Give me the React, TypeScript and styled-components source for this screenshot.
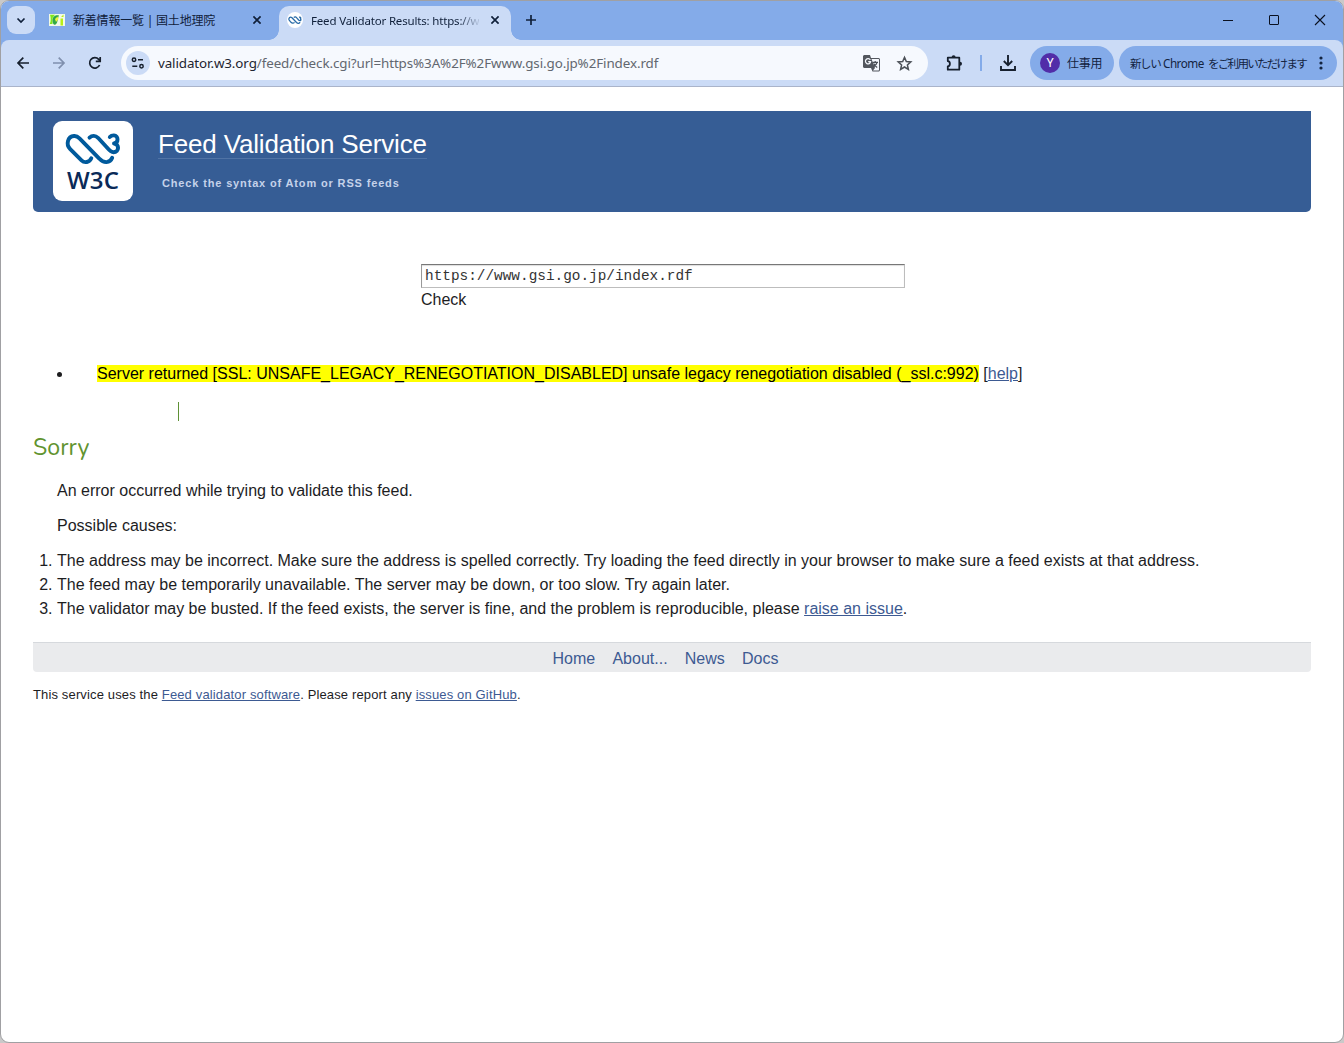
import React from 'react';
import styled, { createGlobalStyle } from 'styled-components';

const UI = `"Noto Sans", "Noto Sans CJK JP", sans-serif`;
const ARIAL = `"Liberation Sans", Arial, sans-serif`;

const Global = createGlobalStyle`
  * { box-sizing: border-box; }
  body { margin: 0; background: #c9c9c9; overflow: hidden; }
`;

const Window = styled.div`
  width: 1344px; height: 1043px;
  border: 1px solid #a0a0a3;
  border-radius: 9px;
  background: #fff;
  overflow: hidden;
  display: flex; flex-direction: column;
  font-family: ${UI};
`;
const TabStrip = styled.div`
  flex: 0 0 47px; margin-bottom: -8px;
  padding: 5px 0 0 6px;
  background: #84abe9;
  display: flex; align-items: flex-start;
  color: #10203a;
`;
const TabSearch = styled.div`
  width: 28px; height: 28px; border-radius: 9px; margin: 0 14px 0 0;
  background: #cbdbf6;
  display: grid; place-items: center;
`;
const Tab = styled.div<{ $w: number; $active?: boolean }>`
  position: relative;
  width: ${p => p.$w}px; height: ${p => (p.$active ? 34 : 28)}px;
  padding: 0 0 ${p => (p.$active ? 6 : 0)}px 0;
  border-radius: 10px 10px 0 0;
  background: ${p => (p.$active ? '#cbdbf6' : 'transparent')};
  display: flex; align-items: center;
  font-size: 12px;
  &::before, &::after {
    content: ''; display: ${p => (p.$active ? 'block' : 'none')};
    position: absolute; bottom: 0; width: 10px; height: 10px;
  }
  &::before { left: -10px; background: radial-gradient(circle at 0 0, transparent 9.5px, #cbdbf6 10px); }
  &::after { right: -10px; background: radial-gradient(circle at 100% 0, transparent 9.5px, #cbdbf6 10px); }
`;
const TabTitle = styled.div<{ $w: number; $ls: number; $size?: number; $fade?: boolean }>`
  width: ${p => p.$w}px; margin-left: 8px; padding-top: 2px;
  white-space: nowrap;
  font-size: ${p => p.$size ?? 12}px;
  letter-spacing: ${p => p.$ls}px;
  line-height: 20px;
  ${p => p.$fade && 'mask-image: linear-gradient(to right, #000 88%, rgba(0,0,0,.15) 99%);'}
`;
const Icon = styled.svg<{ $ml?: number; $sw?: number }>`
  display: block; flex: none; overflow: visible;
  margin-left: ${p => p.$ml ?? 0}px;
  fill: none; stroke: currentColor; stroke-width: ${p => p.$sw ?? 1.7};
`;
const WinButtons = styled.div`
  margin-left: auto; display: flex; height: 28px; align-items: center;
  gap: 36px; padding-right: 18px; color: #0a1020;
`;
const Toolbar = styled.div`
  position: relative;
  flex: 0 0 47px; height: 47px;
  border-bottom: 1px solid #aab4ca;
  border-radius: 8px 8px 0 0;
  background: #cbdbf6;
  display: flex; align-items: center;
  padding-left: 14px;
  color: #17202e;
`;
const Omnibox = styled.div`
  width: 807px; height: 34px; border-radius: 17px; margin-left: 20px;
  background: #f6f9fe;
  display: flex; align-items: center;
  padding-left: 5px; color: #4c5158;
`;
const SiteInfo = styled.div`
  width: 24px; height: 24px; border-radius: 50%;
  background: #cbdbf6; color: #17202e;
  display: grid; place-items: center;
`;
const Url = styled.div`
  margin-left: 8px; width: 705px;
  font-size: 13.4px; letter-spacing: -0.1px;
  color: #62676f; white-space: nowrap; line-height: 20px;
  b { font-weight: 400; color: #1d2430; }
`;
const Divider = styled.div`
  width: 2px; height: 16px; margin: 0 18px 0 17px; background: #84abe9;
`;
const Pill = styled.div<{ $w: number; $ml: number; $pl: number }>`
  flex: none;
  width: ${p => p.$w}px; height: 34px; border-radius: 17px;
  margin-left: ${p => p.$ml}px; padding-left: ${p => p.$pl}px;
  background: #84abe9; color: #13233f;
  display: flex; align-items: center;
  font-size: 12px; white-space: nowrap;
`;
const Avatar = styled.div`
  width: 20px; height: 20px; border-radius: 50%; margin-right: 7px;
  background: #512da8; color: #fff;
  font: 400 12px/20px Roboto, sans-serif; text-align: center;
`;
const Fit = styled.span<{ $ls: number; $size?: number; $w?: number }>`
  letter-spacing: ${p => p.$ls}px;
  font-size: ${p => p.$size ?? 12}px;
  ${p => p.$w && `width: ${p.$w}px;`}
`;

const Page = styled.main`
  flex: 1; padding: 24px 32px 0;
  font: 16px/24px ${ARIAL};
  color: #1d1d1f;
`;
const Banner = styled.header`
  height: 101px; border-radius: 0 0 5px 5px;
  background: #365d95;
  display: flex; padding: 10px 0 0 20px;
`;
const Logo = styled.div`
  width: 80px; height: 80px; border-radius: 9px; background: #fff;
  display: flex; flex-direction: column; align-items: center;
`;
const LogoText = styled.div`
  font: 600 24px/24px "Open Sans", sans-serif; color: #0a2a58;
  margin-top: 1px; letter-spacing: 0.2px;
`;
const BannerText = styled.div`
  margin-left: 25px;
`;
const Title = styled.div`
  margin-top: 8px; height: 30px;
  font-size: 26px; line-height: 30px; letter-spacing: -0.17px; color: #fff;
  border-bottom: 1px solid #5073a5;
  white-space: nowrap;
`;
const Tagline = styled.div`
  margin: 16px 0 0 4px;
  font-size: 11px; font-weight: 700; line-height: 16px; letter-spacing: 0.85px;
  color: #c5d2ea;
`;
const Form = styled.div`
  width: 484px; margin: 52px 0 0 388px;
`;
const Field = styled.div`
  height: 24px; padding: 0 3px;
  border: 1px solid #bdbdbd; border-top-color: #777; border-left-color: #999;
  box-shadow: inset 0 1px 1px #ddd;
  font: 14.4px/22px "Liberation Mono", monospace;
  color: #333;
`;
const Message = styled.ul`
  margin: 50px 0 0; padding: 0 0 0 64px; list-style: none;
  display: flex;
  li { position: relative; }
  li::before {
    content: ''; position: absolute; left: -40px; top: 10px;
    width: 5px; height: 5px; border-radius: 50%; background: #1d1d1f;
  }
`;
const Mark = styled.span`
  background: #ff0; color: #000;
`;
const Link = styled.a`
  color: #3d5a92; text-decoration: underline;
`;
const Bar = styled.div`
  width: 1px; height: 19px; margin: 16px 0 0 145px; background: #5f9136;
`;
const Sorry = styled.h2`
  margin: 11px 0 0; font: 400 23.2px/32px Nunito, "Noto Sans", sans-serif; color: #61932f;
`;
const Para = styled.p<{ $mt: number }>`
  margin: ${p => p.$mt}px 0 0 24px;
`;
const Causes = styled.ol`
  margin: 11px 0 0; padding: 0 0 0 24px;
`;
const Footer = styled.nav`
  height: 30px; margin-top: 21px; padding: 0 13px 0 0;
  background: #eaebed; border-top: 1px solid #d6d9dd; border-radius: 0 0 4px 4px;
  display: flex; justify-content: center; gap: 17.2px;
  line-height: 32px; color: #3d5a92;
`;
const Small = styled.div`
  margin-top: 11px; font-size: 13px; letter-spacing: 0.14px;
`;

const Swirl = () => (
  <svg width="80" height="46" viewBox="0 0 80 46" fill="none" stroke="#005a9c" strokeWidth="3.9" strokeLinecap="round" strokeLinejoin="round">
    <path d="M38.300 37.200C36.500 41.500 31.500 42.300 28.500 39.300L17 27.800C12.800 23.500 14.500 15.500 21 15C23.500 14.800 25 15.800 26.500 17.300L46.500 37.800C50.500 42.200 57 42.500 59.200 36.800" />
    <path d="M36.500 16.700C39 14.300 42.500 14.300 45 16.800L53.500 26C56.500 29.500 58.300 31.200 60.500 31.200C66.500 31 66.500 23 61 22.500C65.800 21.800 65.600 14.600 61 14.400C59 14.300 57.800 14.900 56.800 16" />
  </svg>
);

const Cross = ({ ml }: { ml: number }) => (
  <Icon $ml={ml} width="8" height="8" viewBox="0 0 8 8"><path d="M.4.4l7.200 7.200M7.600.4L.4 7.600" /></Icon>
);

export default function App() {
  return (
    <>
      <Global />
      <Window>
        <TabStrip>
          <TabSearch>
            <Icon width="8" height="5" viewBox="0 0 8 5"><path d="M.5.5L4 4 7.500.5" /></Icon>
          </TabSearch>
          <Tab $w={230}>
            <Icon width="16" height="12" viewBox="0 0 16 12" $sw={0}>
              <rect width="16" height="12" fill="#f3fae6" />
              <path d="M1 .8h5L3.500 4v6H.8C2 7 2 4 1 .8z" fill="#7fe81c" />
              <path d="M12 3l2.500-2.500V3zM11.500 4.500h2.500v7h-2.500z" fill="#b8f016" />
              <path d="M3.500 6.500C3.500 2 7 .8 10 1.500 8.500 4 9 10 6 10.800 4.500 11 3.500 9 3.500 6.500z" fill="#31a846" />
              <path d="M6 5l2.500-2.500L9.500 5 7 8z" fill="#f0f43a" />
            </Icon>
            <TabTitle $w={170} $ls={-0.2}>新着情報一覧 | 国土地理院</TabTitle>
            <Cross ml={10} />
          </Tab>
          <Tab $w={232} $active>
            <Icon $ml={8} width="16" height="16" viewBox="0 0 16 16" $sw={1.3}>
              <circle cx="8" cy="8" r="8" fill="#fff" stroke="none" />
              <path d="M7.500 10.300C6.500 11.500 5 11.300 4 10.300L2.200 8.200C1 6.500 3 4 5 5.700L9.500 10.500C11 12 13 11.500 12.800 9.800M6.800 5.500C7.800 4.600 8.900 4.900 9.500 5.600L11.800 8.200C14 9.400 14.600 7.200 13 6.900C14.400 6.500 13.800 4.700 12 5.300" stroke="#2a6ca8" />
            </Icon>
            <TabTitle $w={168} $size={11.5} $ls={-0.17} $fade>Feed Validator Results: https://w</TabTitle>
            <Cross ml={12} />
          </Tab>
          <Icon $ml={15} width="10" height="28" viewBox="0 0 10 28"><path d="M5 9v10M0 14h10" /></Icon>
          <WinButtons>
            <Icon width="10" height="10" viewBox="0 0 10 10" $sw={1}><path d="M0 5.500h10" /></Icon>
            <Icon width="10" height="10" viewBox="0 0 10 10" $sw={1}><rect x=".5" y=".5" width="9" height="9" rx=".5" /></Icon>
            <Icon width="10" height="10" viewBox="0 0 10 10" $sw={1.1}><path d="M0 0l10 10M10 0L0 10" /></Icon>
          </WinButtons>
        </TabStrip>
        <Toolbar>
          <Icon $ml={2} width="12" height="12" viewBox="0 0 12 12"><path d="M12 6H1M6.300.7L1 6l5.300 5.300" /></Icon>
          <Icon $ml={24} width="12" height="12" viewBox="0 0 12 12" color="#8090ae"><path d="M0 6h11M5.700.7L11 6l-5.300 5.300" /></Icon>
          <Icon $ml={24} width="12" height="12" viewBox="0 0 12 12"><path d="M10.600 8A5.200 5.200 0 1 1 9.700 2.300L11 3.800M11.200 0v4.400H6.800" /></Icon>
          <Omnibox>
            <SiteInfo>
              <Icon width="14" height="12" viewBox="0 0 14 12" $sw={1.5}>
                <circle cx="3" cy="2.700" r="1.700" /><path d="M7 2.700h5M1.300 9.200h5" /><circle cx="10.500" cy="9.200" r="1.700" />
              </Icon>
            </SiteInfo>
            <Url><b>validator.w3.org</b>/feed/check.cgi?url=https%3A%2F%2Fwww.gsi.go.jp%2Findex.rdf</Url>
            <Icon width="17" height="17" viewBox="0 0 17 17" $sw={1.2}>
              <path d="M1.500 0H7l1 3h7.500c.8 0 1.500.7 1.500 1.500V15c0 .8-.7 1.500-1.500 1.500H9.500L8 13H1.500C.7 13 0 12.300 0 11.500v-10C0 .7.700 0 1.500 0z" fill="#53575e" stroke="none" />
              <path d="M8.500 4h7c.3 0 .5.200.5.500V15c0 .3-.2.500-.5.500H10l2-2.500z" fill="#f6f9fe" stroke="none" />
              <path d="M7.300 5A2.600 2.600 0 1 0 7.600 6.700H5.200" stroke="#f6f9fe" />
              <path d="M9.500 7.300h5.500M12.200 6v1.300M14 7.500c-.5 2-2 3.500-3.500 4.500M10.700 8.500c.5 1.500 2 3 3.500 4" />
            </Icon>
            <Icon $ml={17} width="15" height="15" viewBox="0 0 15 15" $sw={1.5}>
              <path d="M7.500 1.300l1.800 4.200 4.500.4-3.400 3 1 4.500-3.900-2.400-3.900 2.400 1-4.500-3.400-3 4.500-.4z" />
            </Icon>
          </Omnibox>
          <Icon $ml={18} width="17" height="17" viewBox="0 0 17 17" $sw={1.8}>
            <path d="M1.800 2.700H13.300V14.700H1.800V11.300C4.600 11 4.600 6.400 1.800 6.100Z" strokeLinejoin="round" />
            <path d="M5.600 2.200a2 2 0 0 1 4 0zM14 6.700a2 2 0 0 1 0 4z" fill="currentColor" stroke="none" />
          </Icon>
          <Divider />
          <Icon width="16" height="16" viewBox="0 0 16 16" $sw={1.9}>
            <path d="M8 0v10M3.800 6L8 10.200 12.200 6M1 11v4h14v-4" />
          </Icon>
          <Pill $w={84} $ml={14} $pl={10}><Avatar>Y</Avatar><Fit $ls={-0.2}>仕事用</Fit></Pill>
          <Pill $w={218} $ml={5} $pl={11}>
            <Fit $ls={-1.4} $size={11.5} $w={33}>新しい</Fit>
            <Fit $ls={-0.5} $size={11.7} $w={45}>Chrome</Fit>
            <Fit $ls={-1.7} $size={11.5} $w={100}>をご利用いただけます</Fit>
            <Icon $ml={11} $sw={0} width="4" height="14" viewBox="0 0 4 14">
              <g fill="#13233f"><circle cx="2" cy="2" r="1.600" /><circle cx="2" cy="7" r="1.600" /><circle cx="2" cy="12" r="1.600" /></g>
            </Icon>
          </Pill>
        </Toolbar>
        <Page>
          <Banner>
            <Logo><Swirl /><LogoText>W3C</LogoText></Logo>
            <BannerText>
              <Title>Feed Validation Service</Title>
              <Tagline>Check the syntax of Atom or RSS feeds</Tagline>
            </BannerText>
          </Banner>
          <Form>
            <Field>https://www.gsi.go.jp/index.rdf</Field>
            <div>Check</div>
          </Form>
          <Message>
            <li>
              <Mark>Server returned [SSL: UNSAFE_LEGACY_RENEGOTIATION_DISABLED] unsafe legacy renegotiation disabled (_ssl.c:992)</Mark> [<Link>help</Link>]
            </li>
          </Message>
          <Bar />
          <Sorry>Sorry</Sorry>
          <Para $mt={15}>An error occurred while trying to validate this feed.</Para>
          <Para $mt={11}>Possible causes:</Para>
          <Causes>
            <li>The address may be incorrect. Make sure the address is spelled correctly. Try loading the feed directly in your browser to make sure a feed exists at that address.</li>
            <li>The feed may be temporarily unavailable. The server may be down, or too slow. Try again later.</li>
            <li>The validator may be busted. If the feed exists, the server is fine, and the problem is reproducible, please <Link>raise an issue</Link>.</li>
          </Causes>
          <Footer><span>Home</span><span>About...</span><span>News</span><span>Docs</span></Footer>
          <Small>This service uses the <Link>Feed validator software</Link>. Please report any <Link>issues on GitHub</Link>.</Small>
        </Page>
      </Window>
    </>
  );
}
